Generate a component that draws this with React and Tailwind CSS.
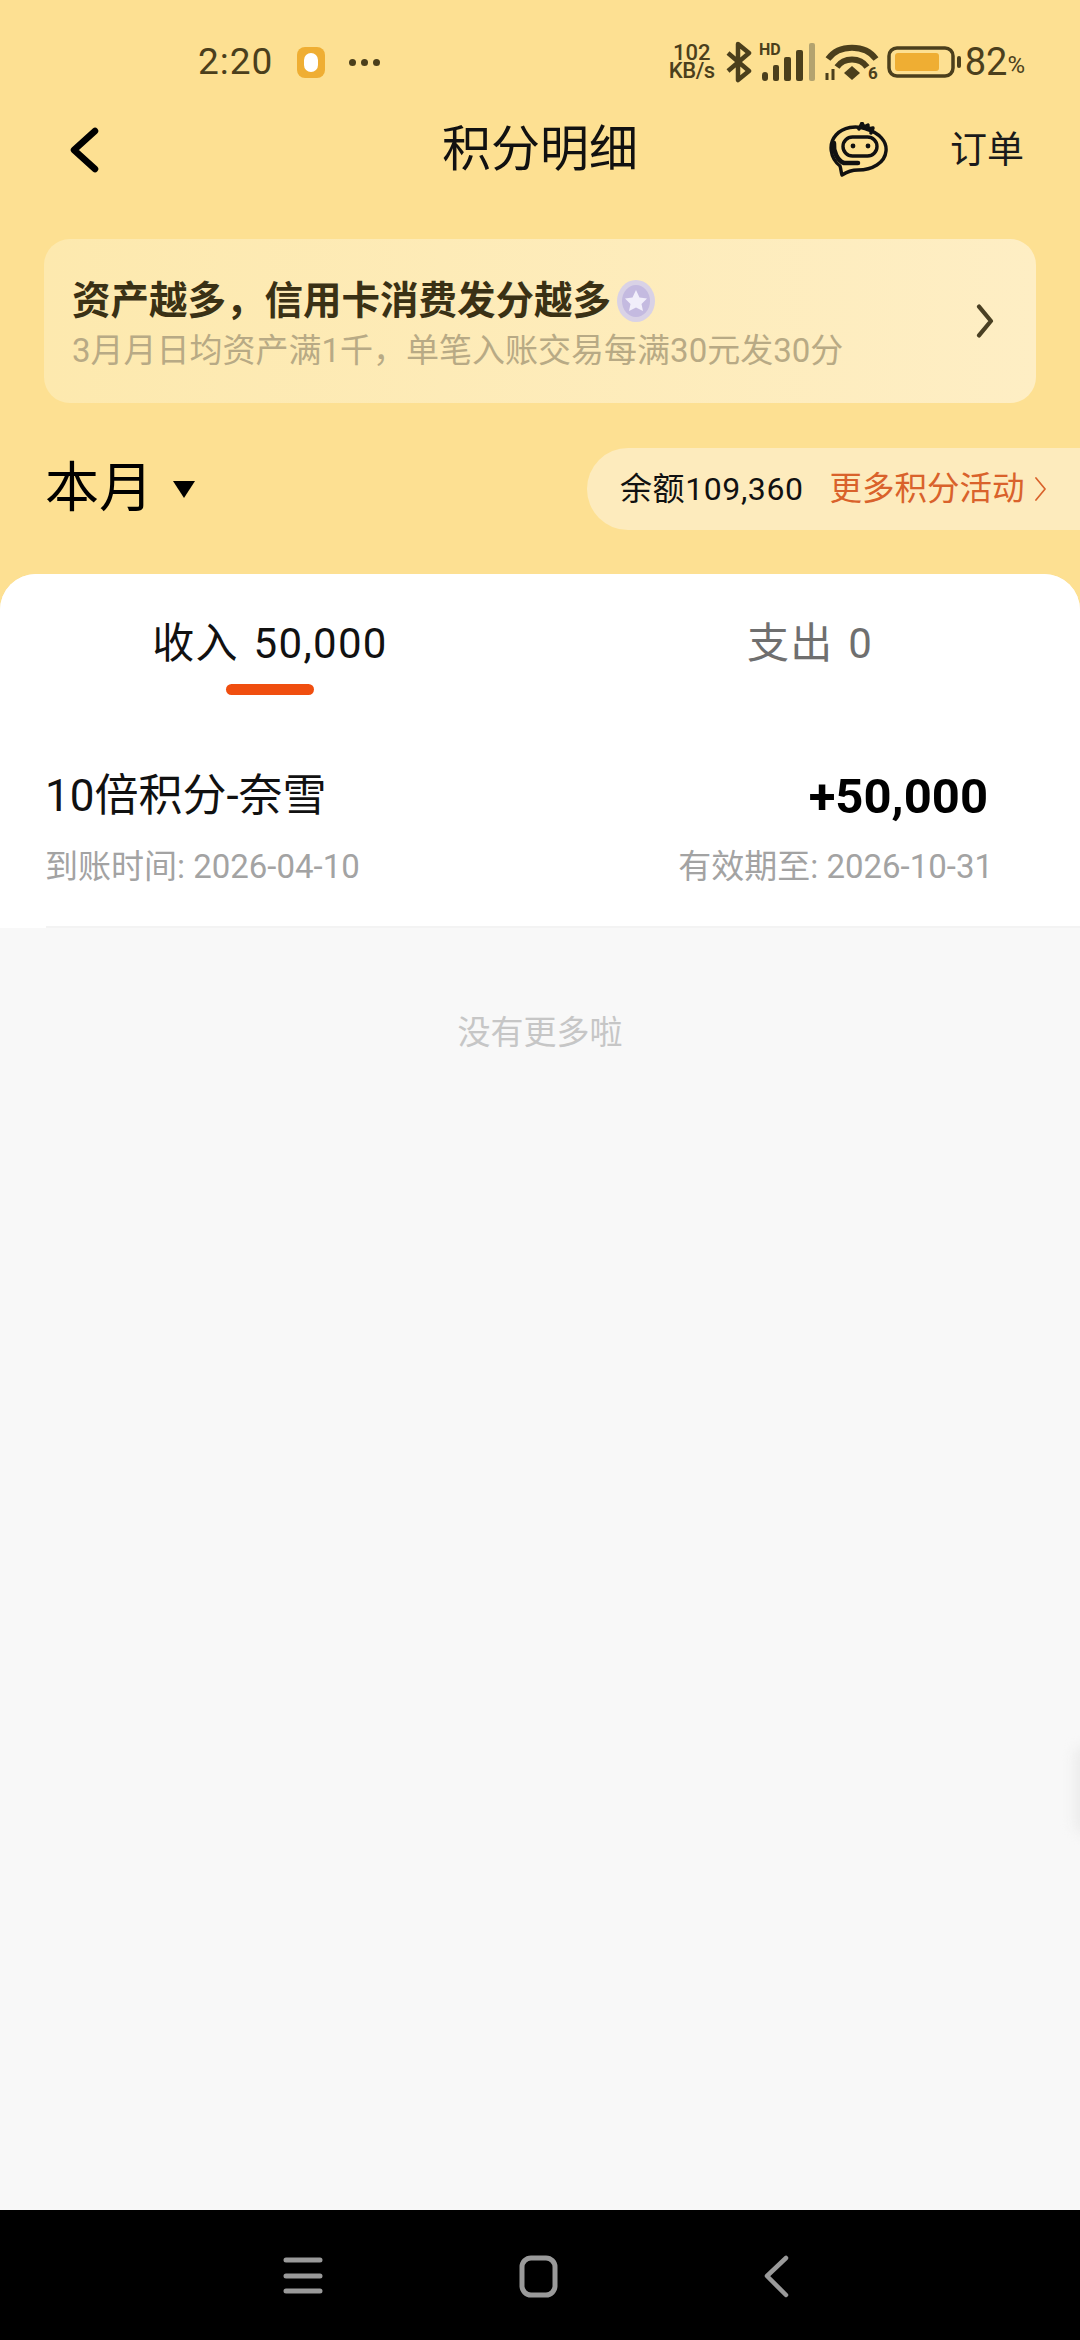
import React from "react";

function Chevron({ className, width = 2 }) {
  return (
    <svg className={className} viewBox="0 0 20 40" fill="none" stroke="currentColor" strokeWidth={width} strokeLinecap="round" strokeLinejoin="round">
      <path d="M3 3 L17 20 L3 37" />
    </svg>
  );
}

function StatusBar() {
  return (
    <div className="h-[100px] pt-[24px] pl-[198px] pr-[55px] flex items-center text-[#4b3f1c]">
      <span className="text-[37px] leading-[76px] tracking-[1px]">2:20</span>
      <div className="ml-[24px] w-[28px] h-[31px] rounded-[8px] bg-[#efae33] flex items-center justify-center">
        <div className="w-[14px] h-[19px] rounded-full bg-white" />
      </div>
      <div className="ml-[24px] flex gap-[5px]">
        <div className="w-[7px] h-[7px] rounded-full bg-[#4b3f1c]" />
        <div className="w-[7px] h-[7px] rounded-full bg-[#4b3f1c]" />
        <div className="w-[7px] h-[7px] rounded-full bg-[#4b3f1c]" />
      </div>

      <div className="ml-auto flex items-center">
        <div className="w-[50px] flex flex-col items-center text-[22px] leading-[18px] font-medium">
          <span>102</span>
          <span className="tracking-[-0.5px]">KB/s</span>
        </div>
        <svg className="ml-[8px] w-[28px] h-[42px]" viewBox="0 0 28 42" fill="none" stroke="currentColor" strokeWidth="4.5" strokeLinejoin="round">
          <path d="M3 12 L24 30 L13 39 L13 3 L24 12 L3 30" />
        </svg>
        <svg className="ml-[6px] w-[58px] h-[40px] overflow-visible" viewBox="0 0 58 40">
          <text x="0" y="13" fontSize="16" fontWeight="700" fill="currentColor" fontFamily="Roboto, sans-serif">HD</text>
          <rect x="3" y="30" width="6" height="9" rx="3" fill="currentColor" />
          <rect x="14" y="23" width="6" height="16" rx="2" fill="currentColor" />
          <rect x="25" y="15" width="7" height="24" rx="2" fill="currentColor" />
          <rect x="37" y="8" width="7" height="31" rx="2" fill="currentColor" />
          <rect x="50" y="1" width="6" height="38" rx="2" fill="#b3a36f" />
        </svg>
        <svg className="ml-[5px] w-[60px] h-[38px] overflow-visible" viewBox="0 0 60 38" fill="none" stroke="currentColor" strokeWidth="6">
          <path d="M6 16 C17 1 43 1 54 16" />
          <path d="M15 24 C22 14 38 14 45 24" />
          <path d="M30 23 L38 30 L30 37 L22 30 Z" fill="currentColor" stroke="none" />
          <path d="M5 30 V37 M11 26 V37" strokeWidth="3" />
          <text x="46" y="36" fontSize="17" fontWeight="700" fill="currentColor" stroke="none" fontFamily="Roboto, sans-serif">6</text>
        </svg>
        <svg className="ml-[5px] w-[75px] h-[32px]" viewBox="0 0 75 32">
          <rect x="2" y="2" width="64" height="28" rx="8" fill="none" stroke="currentColor" strokeWidth="3.5" />
          <rect x="8" y="7" width="44" height="18" rx="3" fill="#efae33" />
          <rect x="70" y="10" width="4" height="12" rx="2" fill="currentColor" />
        </svg>
        <span className="ml-[3px] text-[38px] leading-[76px]">82</span>
        <span className="text-[24px] mt-[6px] leading-[76px]">%</span>
      </div>
    </div>
  );
}

function NavBar() {
  return (
    <div className="h-[100px] pl-[68px] pr-[56px] grid grid-cols-[1fr_auto_1fr] items-center text-black">
      <svg className="w-[32px] h-[46px]" viewBox="0 0 32 46" fill="none" stroke="currentColor" strokeWidth="6.5" strokeLinecap="round" strokeLinejoin="round">
        <path d="M27 4 L6 23 L27 42" />
      </svg>
      <div className="pr-[12px] text-center text-[49px] leading-[60px] text-[#111]">积分明细</div>
      <div className="flex items-center justify-end">
        <svg className="w-[60px] h-[56px] mr-[62px]" viewBox="0 0 60 56" fill="none" stroke="#111" strokeWidth="3.4" strokeLinecap="round" strokeLinejoin="round">
          <path d="M12 44 C2 36 0 22 8 13 C15 5 28 3 38 7 C52 11 59 20 58 29 C57 41 44 48 30 48 C24 48 20 49 14 53 C13 50 13 47 12 44 Z" />
          <path d="M31 7 L34 1 L36 5 L40 3 L40 7 L45 6 L43 11" />
          <rect x="15" y="15" width="34" height="19" rx="9.5" />
          <circle cx="25" cy="24" r="2.4" fill="#111" stroke="none" />
          <circle cx="40" cy="24" r="2.4" fill="#111" stroke="none" />
          <path d="M6 21 C5 30 10 39 16 41 L30 41" strokeWidth="4.5" />
        </svg>
        <span className="pt-[2px] text-[37px] leading-[50px] text-[#1a1a1a]">订单</span>
      </div>
    </div>
  );
}

function Banner() {
  return (
    <div className="mt-[39px] mx-[44px] h-[164px] rounded-[26px] bg-gradient-to-r from-[#fde9ae] to-[#feeec4] pl-[28px] pr-[40px] flex items-center justify-between">
      <div className="pt-[8px]">
        <div className="flex items-center h-[46px]">
          <span className="text-[38.5px] leading-[46px] font-bold text-[#3a3115]">资产越多，信用卡消费发分越多</span>
          <svg className="ml-[5px] w-[40px] h-[44px]" viewBox="0 0 40 44">
            <ellipse cx="20" cy="22" rx="19" ry="21" fill="#d9d2e6" />
            <ellipse cx="20" cy="22" rx="14" ry="16" fill="#c4bae0" />
            <path d="M20 11 L23.5 18.5 L31 19.5 L25.5 25 L27 32 L20 28.5 L13 32 L14.5 25 L9 19.5 L16.5 18.5 Z" fill="#f1eefa" strokeLinejoin="round" />
          </svg>
        </div>
        <div className="mt-[5px] text-[33px] leading-[44px] text-[#b8aa85]">3月月日均资产满1千，单笔入账交易每满30元发30分</div>
      </div>
      <Chevron className="w-[22px] h-[34px] text-[#4a4023]" width={5} />
    </div>
  );
}

function MonthRow() {
  return (
    <div className="mt-[45px] pl-[45px] flex items-center justify-between">
      <div className="flex items-center">
        <span className="text-[54px] leading-[70px] text-black">本月</span>
        <div className="ml-[20px] w-0 h-0 border-x-[11px] border-x-transparent border-t-[17px] border-t-black" />
      </div>
      <div className="w-[493px] h-[82px] rounded-l-[41px] bg-[#fdebbd] pl-[33px] flex items-center">
        <span className="text-[32px] leading-[44px] text-[#111] tracking-[0.6px]">余额109,360</span>
        <span className="ml-[26px] text-[32.5px] leading-[44px] text-[#d9622b]">更多积分活动</span>
        <Chevron className="ml-[8px] w-[15px] h-[26px] text-[#d9622b]" width={2.6} />
      </div>
    </div>
  );
}

function Tabs() {
  return (
    <div className="pt-[45px] grid grid-cols-2">
      <div className="flex flex-col items-center">
        <span className="text-[42px] leading-[50px] text-[#111] whitespace-pre tracking-[1.3px] [word-spacing:3px]">收入 50,000</span>
        <div className="mt-[15px] w-[88px] h-[11px] rounded-full bg-[#f04e0f]" />
      </div>
      <div className="flex justify-center">
        <span className="text-[42px] leading-[50px] text-[#6f6f6f] whitespace-pre tracking-[1.3px] [word-spacing:3px]">支出 0</span>
      </div>
    </div>
  );
}

function PointsRow() {
  return (
    <div className="mt-[73px] pl-[45px] pr-[92px] pb-[39px]">
      <div className="flex items-center justify-between h-[56px]">
        <span className="text-[44px] leading-[56px] text-[#111]">10倍积分-奈雪</span>
        <span className="pt-[2px] text-[49px] leading-[56px] font-bold text-black">+50,000</span>
      </div>
      <div className="mt-[23px] -mr-[5px] flex items-center justify-between h-[40px] text-[33px] leading-[40px] text-[#a3a3a3]">
        <span>到账时间: 2026-04-10</span>
        <span>有效期至: 2026-10-31</span>
      </div>
    </div>
  );
}

function BottomBar() {
  return (
    <div className="h-[130px] bg-black flex items-start text-[#9a9a9a]">
      <div className="pl-[283px] pt-[45px] flex">
        <svg className="w-[40px] h-[44px]" viewBox="0 0 40 44" fill="none" stroke="currentColor" strokeWidth="5" strokeLinecap="round">
          <path d="M3 5 H37 M3 21 H37 M3 36 H37" />
        </svg>
        <svg className="ml-[196px] w-[40px] h-[44px]" viewBox="0 0 40 44" fill="none" stroke="currentColor" strokeWidth="5">
          <rect x="3" y="3" width="33" height="37" rx="9" />
        </svg>
        <svg className="ml-[204px] w-[26px] h-[44px]" viewBox="0 0 26 44" fill="none" stroke="currentColor" strokeWidth="4.5" strokeLinecap="round" strokeLinejoin="round">
          <path d="M23 3 L4 21 L23 40" />
        </svg>
      </div>
    </div>
  );
}

export default function App() {
  return (
    <div
      className="relative w-[1080px] h-[2340px] overflow-hidden flex flex-col bg-[#fde092]"
      style={{ fontFamily: 'Roboto, "Noto Sans CJK SC", sans-serif' }}
    >
      <StatusBar />
      <NavBar />
      <Banner />
      <MonthRow />

      <div className="mt-[44px] flex-1 rounded-t-[36px] bg-[#f8f8f8] overflow-hidden">
        <div className="bg-white">
          <Tabs />
          <PointsRow />
          <div className="ml-[46px] h-[2px] bg-[#f3f3f3]" />
        </div>
        <div className="pt-[85px] text-center text-[33px] leading-[40px] text-[#c6c6c6]">没有更多啦</div>
      </div>

      <BottomBar />

      <div className="absolute right-[-20px] top-[1745px] w-[26px] h-[90px] rounded-full bg-[#ececec] blur-[6px]" />
    </div>
  );
}
